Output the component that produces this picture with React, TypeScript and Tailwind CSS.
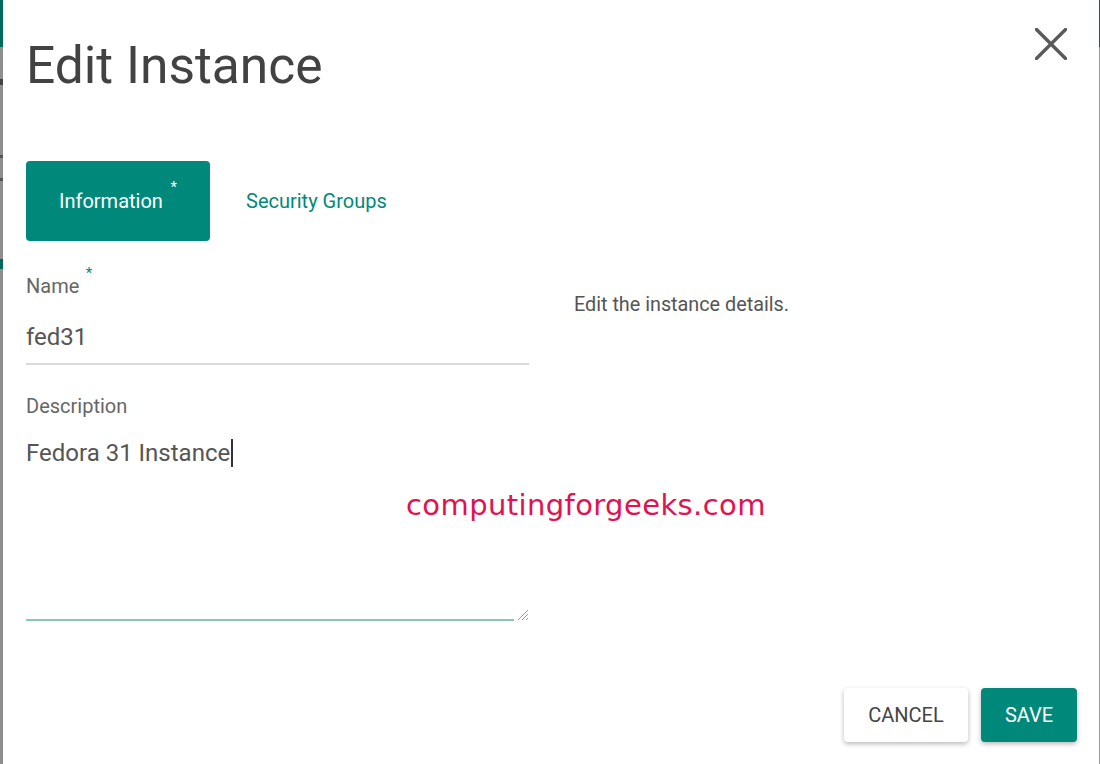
import { useState } from "react";

const font = { fontFamily: "Roboto, 'Noto Sans', sans-serif" };

function CloseIcon() {
  return (
    <svg width="32" height="32" viewBox="0 0 32 32" className="shrink-0">
      <path d="M1.5 1.5 L30.5 30.5 M30.5 1.5 L1.5 30.5" stroke="#5a5a5a" strokeWidth="3.4" strokeLinecap="square" />
    </svg>
  );
}

function Req() {
  return <span className="absolute -top-[13px] -right-[13px] text-[15px] text-[#00897b]">*</span>;
}

export default function App() {
  const [tab] = useState("info");

  return (
    <div className="flex h-[764px] w-[1100px] overflow-hidden bg-white" style={font}>
      {/* background page peeking out on the left */}
      <div className="flex w-[3px] shrink-0 flex-col bg-[#8e8e8e]">
        <div className="h-[47px] bg-[#00695c]" />
        <div className="mt-[32px] h-[6px] bg-[#444]" />
        <div className="mt-[70px] h-[3px] bg-[#555]" />
        <div className="mt-[20px] h-[3px] bg-[#555]" />
        <div className="mt-[78px] h-[10px] bg-[#00695c]" />
      </div>

      <div className="relative flex flex-1 flex-col pl-[23px] pr-[22px]">
        <div className="flex items-start justify-between pt-[36px]">
          <h1 className="text-[51.5px] leading-[60px] text-[#424242]">Edit Instance</h1>
          <div className="mt-[-8px] mr-[10px]">
            <CloseIcon />
          </div>
        </div>

        <div className="mt-[65px] flex items-center">
          <button
            className={`flex h-[80px] w-[184px] items-center rounded-[4px] pl-[33px] text-[20px] ${
              tab === "info" ? "bg-[#00897b] text-white" : "text-[#00897b]"
            }`}
          >
            <span className="relative">
              Information
              <span className="absolute -top-[10px] -right-[14px] text-[15px] text-white">*</span>
            </span>
          </button>
          <button className="ml-[36px] text-[20px] text-[#00897b]">Security Groups</button>
        </div>

        <div className="mt-[32px] flex">
          <div className="flex w-[503px] flex-col">
            <label className="relative self-start text-[20px] leading-[26px] text-[#666]">
              Name
              <Req />
            </label>
            <div className="mt-[22px] text-[24px] leading-[32px] text-[#555]">fed31</div>
            <div className="mt-[10px] h-[2px] bg-[#d9d9d9]" />

            <label className="mt-[28px] text-[20px] leading-[26px] text-[#666]">Description</label>
            <div className="relative mt-[18px] h-[184px]">
              <div className="flex items-center text-[24px] leading-[32px] text-[#555]">
                Fedora 31 Instance
                <span className="ml-[1px] h-[28px] w-[2px] bg-[#333]" />
              </div>
              <div className="absolute bottom-0 left-0 right-[15px] h-[2px] bg-[#8ac5b7]" />
              <svg width="14" height="14" viewBox="0 0 14 14" className="absolute bottom-0 right-0">
                <path d="M13 3 L3 13 M13 7 L7 13 M13 11 L11 13" stroke="#9a9a9a" strokeWidth="1" />
              </svg>
            </div>
          </div>

          <div className="ml-[45px] mt-[19px] text-[19.8px] leading-[26px] text-[#555]">
            Edit the instance details.
          </div>
        </div>

        <div
          className="absolute left-[403px] top-[487px] text-[29px] leading-[36px] tracking-[0.4px] text-[#e0124f]"
          style={{ fontFamily: "'DejaVu Sans', sans-serif" }}
        >
          computingforgeeks.com
        </div>

        <div className="mt-auto mb-[22px] flex justify-end gap-[13px]">
          <button className="h-[54px] w-[124px] rounded-[4px] bg-white text-[20px] text-[#444] shadow-[0_2px_5px_rgba(0,0,0,0.28)]">
            CANCEL
          </button>
          <button className="h-[54px] w-[96px] rounded-[4px] bg-[#00897b] text-[20px] text-white shadow-[0_2px_5px_rgba(0,0,0,0.28)]">
            SAVE
          </button>
        </div>
      </div>

      <div className="flex w-[1px] shrink-0 flex-col bg-[#9a9a9a]">
        <div className="h-[47px] bg-[#00695c]" />
      </div>
    </div>
  );
}
